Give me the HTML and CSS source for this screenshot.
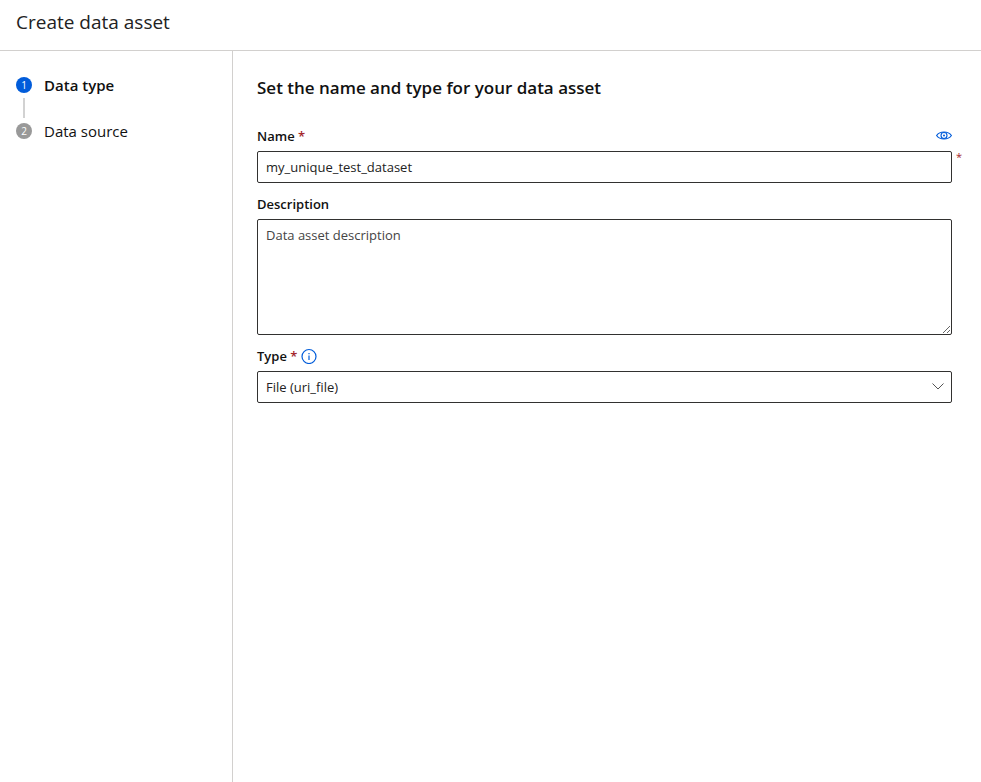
FILE: index.html
```html
<!DOCTYPE html>
<html lang="en">
<head>
<meta charset="utf-8">
<title>Create data asset</title>
<link rel="stylesheet" href="styles.css">
</head>
<body>
<header class="header"><h1 class="title">Create data asset</h1></header>
<div class="body">
  <nav class="sidebar">
    <ol class="steps">
      <li class="step step-current" aria-current="step"><span class="badge">1</span><span>Data type</span></li>
      <li class="step"><span class="badge">2</span><span>Data source</span></li>
    </ol>
  </nav>
  <main class="main">
    <h2 class="heading">Set the name and type for your data asset</h2>
    <form>
      <div class="field">
        <div class="label-row">
          <label for="name">Name <span class="required">*</span></label>
          <button class="icon-button preview" type="button" aria-label="Preview">
            <svg width="16" height="10" viewBox="0 0 16 10" fill="none" stroke="currentColor"><path d="M.6 4.500C2.400 2 5 1 8 1S13.600 2 15.400 4.500C13.600 7 11 8 8 8S2.400 7 .6 4.500Z" stroke-width="1.200"/><circle cx="8" cy="4.500" r="3" stroke-width="1.100"/><circle cx="8" cy="4.500" r="1" fill="currentColor" stroke="none"/></svg>
          </button>
        </div>
        <div class="control">
          <input class="box" id="name" type="text" value="my_unique_test_dataset" required>
          <span class="required outside">*</span>
        </div>
      </div>
      <div class="field">
        <div class="label-row"><label for="description">Description</label></div>
        <textarea class="box area" id="description" placeholder="Data asset description"></textarea>
      </div>
      <div class="field">
        <div class="label-row">
          <label for="type">Type <span class="required">*</span></label>
          <button class="icon-button info" type="button" aria-label="About type">
            <svg width="16" height="16" viewBox="0 0 16 16" fill="none" stroke="currentColor"><circle cx="8" cy="8.500" r="7" stroke-width="1.200"/><path d="M8 7.500v4.500M8 5v1.200" stroke-width="1.200"/></svg>
          </button>
        </div>
        <div class="control">
          <select class="box" id="type"><option>File (uri_file)</option></select>
          <svg class="chevron" width="12" height="7" viewBox="0 0 12 7" fill="none" stroke="currentColor"><path d="M.5.5 6 6 11.500.5"/></svg>
        </div>
      </div>
    </form>
  </main>
</div>
</body>
</html>
```
FILE: styles.css
```css
* {
  box-sizing: border-box;
}

body {
  margin: 0;
  min-height: 100vh;
  display: flex;
  flex-direction: column;
  background: #fff;
  color: #111;
  font-family: "Open Sans", "Noto Sans", sans-serif;
  font-size: 13px;
  line-height: 20px;
}

.header {
  padding: 8px 16px 14px;
  border-bottom: 1px solid #d2d0ce;
}

.title {
  margin: 0;
  font-size: 19px;
  font-weight: 400;
  line-height: 28px;
  color: #222;
}

.body {
  display: flex;
  flex: 1;
}

.sidebar {
  flex: none;
  width: 233px;
  padding: 23px 16px;
  border-right: 1px solid #d2d0ce;
}

.steps {
  margin: 0;
  padding: 0;
  list-style: none;
  font-size: 15px;
  line-height: 22px;
}

.step {
  display: flex;
  align-items: center;
  gap: 12px;
}

.step-current {
  font-weight: 600;
}

.step + .step {
  position: relative;
  margin-top: 24px;
}

.step + .step::before {
  content: "";
  position: absolute;
  left: 7px;
  top: -22px;
  width: 2px;
  height: 20px;
  background: #d2d2d2;
}

.badge {
  width: 16px;
  height: 16px;
  border-radius: 50%;
  background: #999;
  color: #fff;
  font-size: 10px;
  font-weight: 400;
  line-height: 16px;
  text-align: center;
}

.step-current .badge {
  background: #015cda;
}

.main {
  flex: 1;
  min-width: 0;
  padding: 24px 29px 24px 24px;
}

.heading {
  margin: 0 0 22px;
  font-size: 17px;
  font-weight: 600;
  line-height: 26px;
}

.field {
  margin-bottom: 8px;
}

.label-row {
  display: flex;
  align-items: center;
  gap: 4px;
  height: 28px;
  padding-bottom: 2px;
  font-weight: 600;
}

.required {
  color: #a4262c;
}

.icon-button {
  display: flex;
  padding: 0;
  border: 0;
  background: none;
  color: #015cda;
}

.preview {
  margin-left: auto;
}

.control {
  position: relative;
}

.box {
  display: block;
  width: 100%;
  height: 32px;
  margin: 0;
  padding: 0 8px;
  border: 1px solid #323130;
  border-radius: 2px;
  appearance: none;
  background: #fff;
  color: #222;
  font: inherit;
}

.area {
  height: 116px;
  padding: 5px 8px;
  resize: both;
}

.area::placeholder {
  color: #444;
}

.outside {
  position: absolute;
  left: 100%;
  top: -4px;
  margin-left: 4px;
  font-size: 11px;
}

.chevron {
  position: absolute;
  right: 8px;
  top: 12px;
  color: #555;
  pointer-events: none;
}
```
